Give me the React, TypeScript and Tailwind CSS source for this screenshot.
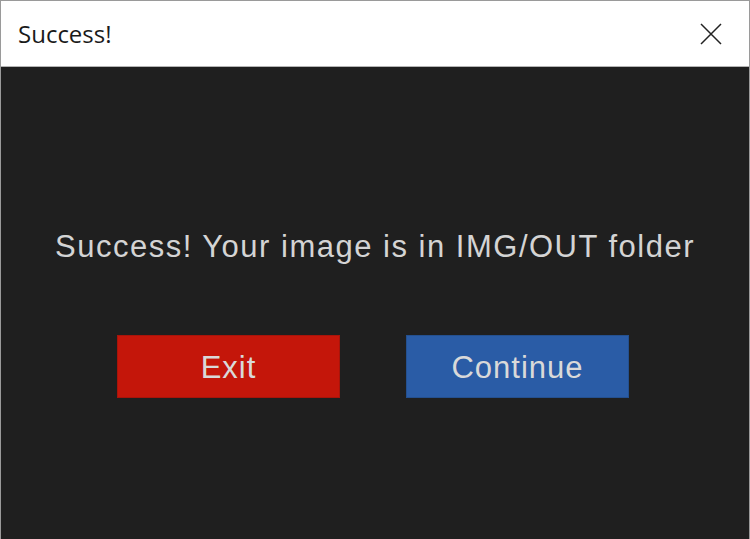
export default function App() {
  return (
    <div className="flex h-[539px] w-[750px] flex-col overflow-hidden border-x border-t border-[#9a9a9a] bg-[#1f1f1f]">
      <header className="flex h-[66px] shrink-0 items-center justify-between border-b border-[#b4b4b4] bg-white pl-[17px] pr-[27px]">
        <span className="text-[24px] text-[#1a1a1a]" style={{ fontFamily: '"Open Sans", "Noto Sans", sans-serif' }}>
          Success!
        </span>
        <svg width="22" height="22" viewBox="0 0 22 22" className="text-[#222]" aria-hidden="true">
          <path d="M1 1L21 21M21 1L1 21" stroke="currentColor" strokeWidth="1.5" />
        </svg>
      </header>
      <main className="flex flex-1 flex-col items-center pt-[160px] font-['Liberation_Sans',Arial,sans-serif]">
        <p className="h-[40px] text-[31px] leading-[40px] tracking-[1.5px] text-[#d4d4d4]">
          Success! Your image is in IMG/OUT folder
        </p>
        <div className="mt-[68px] flex gap-[66px] pr-[4px]">
          <button className="h-[63px] w-[223px] border border-[#a8140a] bg-[#c4160a] pt-[3px] text-[31px] tracking-[1px] text-[#d9d9d9]">
            Exit
          </button>
          <button className="h-[63px] w-[223px] border border-[#24508f] bg-[#2a5ca6] pt-[3px] text-[31px] tracking-[1px] text-[#d9d9d9]">
            Continue
          </button>
        </div>
      </main>
    </div>
  );
}
